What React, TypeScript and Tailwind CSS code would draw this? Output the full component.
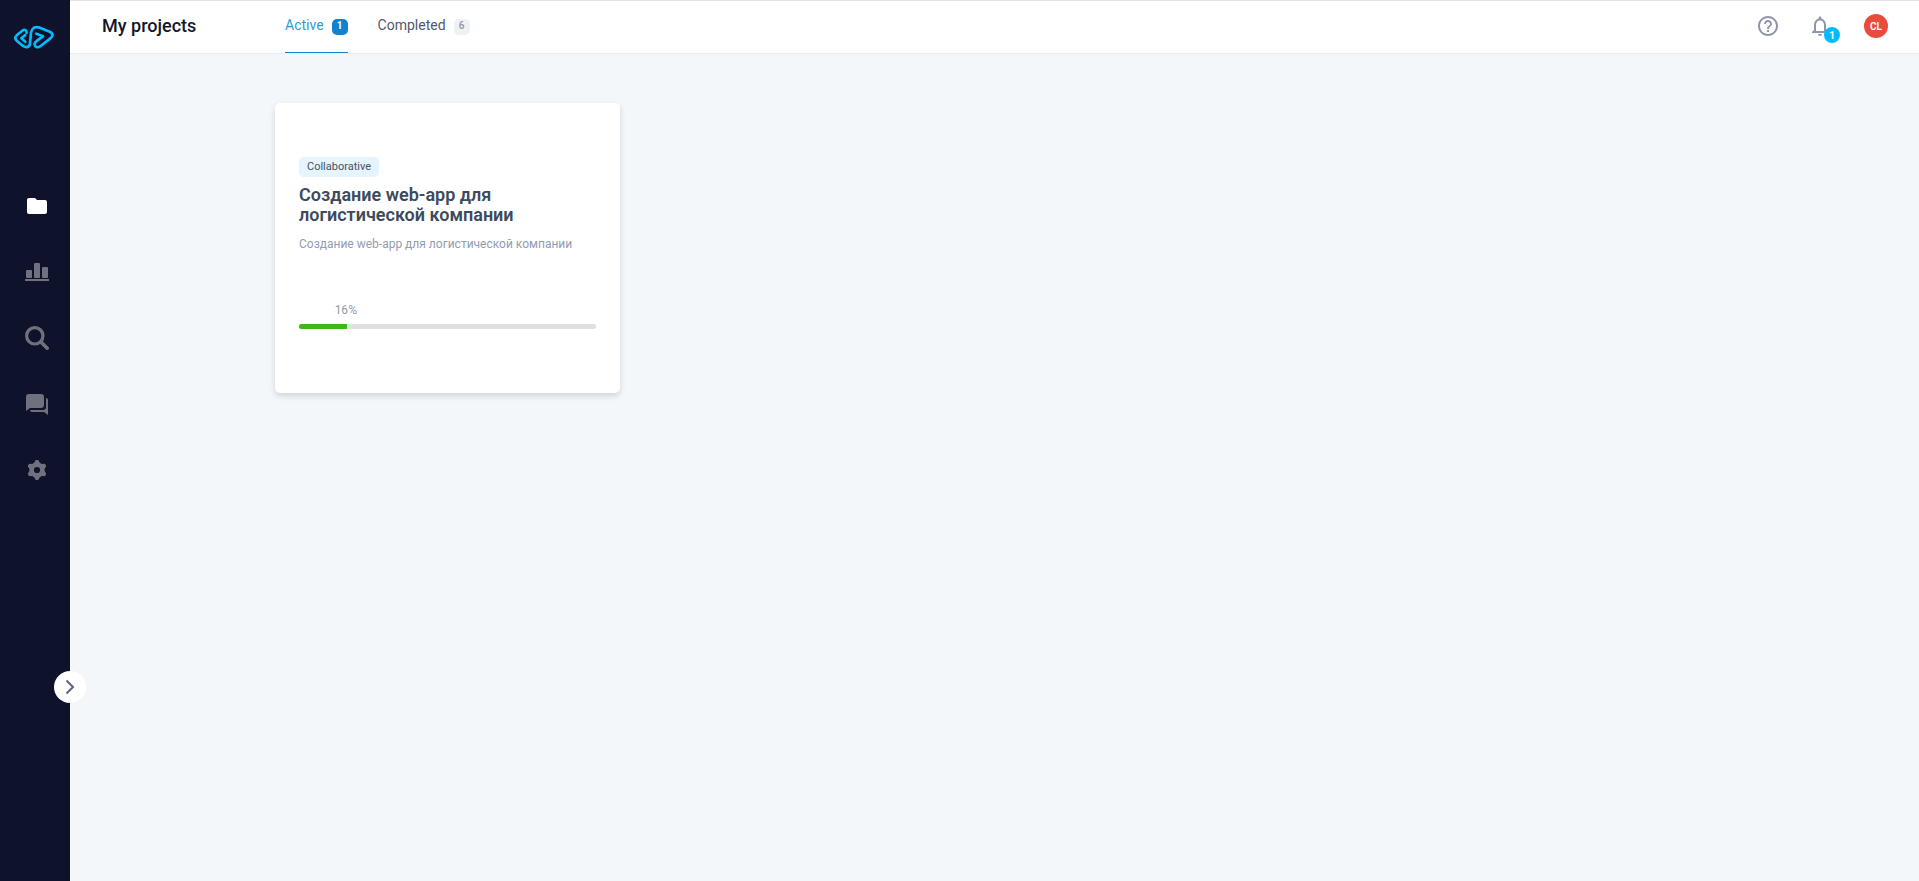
import React, { useState } from 'react';
import { MdFolder, MdHelpOutline, MdNotificationsNone } from 'react-icons/md';

interface Project {
  id: number;
  type: string;
  title: string;
  description: string;
  progress: number;
}

const projects: Project[] = [
  {
    id: 1,
    type: 'Collaborative',
    title: 'Создание web-app для логистической компании',
    description: 'Создание web-app для логистической компании',
    progress: 16
  }
];

const tabs = [
  { id: 'active', label: 'Active', count: 1 },
  { id: 'completed', label: 'Completed', count: 6 }
];

const Logo = () => (
  <svg viewBox="0 0 120 72" className="h-6 w-10" fill="none" stroke="#00bcff" strokeWidth="8" strokeLinecap="round" strokeLinejoin="round">
    <path d="M34 27 L22 37 L34 47" />
    <path d="M38 20 C38 11 31 9 25 14 L8 28 C3 33 3 39 8 44 L27 60 C37 67 47 63 48 52 L51 20 C53 7 62 1 74 4 L107 17 C118 22 118 31 109 37 L80 60 C71 67 61 63 62 54 C62 49 66 46 70 43 L87 31 L67 23" />
  </svg>
);

const ChartIcon = () => (
  <svg viewBox="0 0 24 24" className="size-6" fill="currentColor">
    <rect x="1" y="10" width="6" height="8" rx="1" />
    <rect x="9" y="3" width="6" height="15" rx="1" />
    <rect x="17" y="7" width="6" height="11" rx="1" />
    <rect x="0" y="19" width="24" height="2" />
  </svg>
);

const SearchIcon = () => (
  <svg viewBox="0 0 24 24" className="size-6" fill="none" stroke="currentColor" strokeLinecap="round">
    <circle cx="9.8" cy="9.8" r="8.2" strokeWidth="3.2" />
    <path d="M16.5 16.5 L22.2 22.2" strokeWidth="3.6" />
  </svg>
);

const ChatIcon = () => (
  <svg viewBox="0 0 24 24" className="size-6" fill="currentColor">
    <path d="M4 2h12a3 3 0 0 1 3 3v8a3 3 0 0 1-3 3H5l-4 3V5a3 3 0 0 1 3-3z" />
    <path d="M21 6a2 2 0 0 1 2 2v15l-4-3H7a2 2 0 0 1-2-2h13a3 3 0 0 0 3-3z" />
  </svg>
);

const GearIcon = () => (
  <svg viewBox="0 0 24 24" className="size-6" fill="currentColor">
    <circle cx="12" cy="12" r="5.4" fill="none" stroke="currentColor" strokeWidth="4.6" />
    {[0, 60, 120, 180, 240, 300].map((angle) => (
      <path key={angle} d="M8.8 6 L10.2 2.8 Q10.5 2 11.2 2 H12.8 Q13.5 2 13.8 2.8 L15.2 6 Z" transform={`rotate(${angle} 12 12)`} />
    ))}
  </svg>
);

const navItems = [
  { label: 'Projects', icon: <MdFolder className="size-6" /> },
  { label: 'Statistics', icon: <ChartIcon /> },
  { label: 'Search', icon: <SearchIcon /> },
  { label: 'Messages', icon: <ChatIcon /> },
  { label: 'Settings', icon: <GearIcon /> }
];

const Sidebar = () => (
  <aside className="relative flex w-[70px] shrink-0 flex-col bg-[#0f122b]">
    <a href="#" aria-label="Home" className="mt-[26px] ml-3.5 self-start">
      <Logo />
    </a>
    <nav className="mt-36 ml-1 flex flex-col items-center gap-[42px]">
      {navItems.map((item, index) => (
        <a
          key={item.label}
          href="#"
          aria-label={item.label}
          className={index === 0 ? 'text-white' : 'text-[#70717f]'}
        >
          {item.icon}
        </a>
      ))}
    </nav>
    <button
      aria-label="Expand menu"
      className="absolute -right-4 bottom-[178px] flex size-8 items-center justify-center rounded-full bg-white text-[#5b6577]"
    >
      <svg viewBox="0 0 16 16" className="size-4" fill="none" stroke="currentColor" strokeWidth="2">
        <path d="M4.5 1.5 L11 8 L4.5 14.5" />
      </svg>
    </button>
  </aside>
);

const ProjectCard: React.FC<{ project: Project }> = ({ project }) => (
  <article className="h-[290px] w-[345px] rounded-[5px] bg-white px-6 pt-[54px] shadow-[0_3px_6px_rgba(0,0,0,0.14)]">
    <span className="flex h-5 w-fit items-center rounded-[5px] bg-[#e6f4fd] px-2 text-[11px] text-[#475264]">
      {project.type}
    </span>
    <h2 className="mt-2 w-60 text-lg leading-5 font-semibold text-[#3d4a5c]">{project.title}</h2>
    <p className="mt-[11px] text-xs leading-4 text-[#929cb0]">{project.description}</p>

    <div className="mt-[50px]">
      <div className="text-xs leading-4 text-[#929cb0]" style={{ paddingLeft: `${project.progress - 4}%` }}>
        {project.progress}%
      </div>
      <div className="mt-1.5 h-[5px] overflow-hidden rounded-[3px] bg-[#dde1e6]">
        <div className="h-full bg-[#41b619]" style={{ width: `${project.progress}%` }} />
      </div>
    </div>
  </article>
);

const App = () => {
  const [activeTab, setActiveTab] = useState('active');

  return (
    <div className="flex min-h-screen bg-[#f3f7fa] font-[Roboto,sans-serif]">
      <Sidebar />

      <div className="flex min-w-0 flex-1 flex-col">
        <header className="flex h-[54px] items-stretch border-t border-b border-t-[#e4e4e6] border-b-[#e9ecf0] bg-white pr-[31px] pl-8">
          <h1 className="flex w-[183px] items-center pb-0.5 text-lg leading-6 font-medium text-[#14162b]">
            My projects
          </h1>

          <div className="flex gap-[30px]">
            {tabs.map((tab) => {
              const isActive = tab.id === activeTab;
              return (
                <button
                  key={tab.id}
                  onClick={() => setActiveTab(tab.id)}
                  className={`flex items-center gap-2 border-b text-sm ${
                    isActive ? 'border-[#1183cc] text-[#2f9bd8]' : 'border-transparent text-[#4e596c]'
                  }`}
                >
                  <span className="pb-1">{tab.label}</span>
                  <span
                    className={`flex size-4 items-center justify-center rounded-[5px] text-[10px] ${
                      isActive ? 'bg-[#1183cc] font-bold text-white' : 'bg-[#f0f1f3] font-medium text-[#8d95a8]'
                    }`}
                  >
                    {tab.count}
                  </span>
                </button>
              );
            })}
          </div>

          <div className="ml-auto flex items-center pb-0.5">
            <button aria-label="Help" className="text-[#8e97aa]">
              <MdHelpOutline className="size-6" />
            </button>
            <button aria-label="Notifications" className="relative ml-7 text-[#8e97aa]">
              <MdNotificationsNone className="size-6" />
              <span className="absolute -right-2 -bottom-[5px] flex size-4 items-center justify-center rounded-full bg-[#00bcff] text-[10px] font-bold text-white">
                1
              </span>
            </button>
            <button
              aria-label="Profile"
              className="ml-8 flex size-6 items-center justify-center rounded-full bg-[#e74c3c] text-[10px] font-semibold text-white"
            >
              CL
            </button>
          </div>
        </header>

        <main className="flex flex-wrap gap-6 pt-[49px] pr-8 pl-[205px]">
          {projects.map((project) => (
            <ProjectCard key={project.id} project={project} />
          ))}
        </main>
      </div>
    </div>
  );
};

export default App;
